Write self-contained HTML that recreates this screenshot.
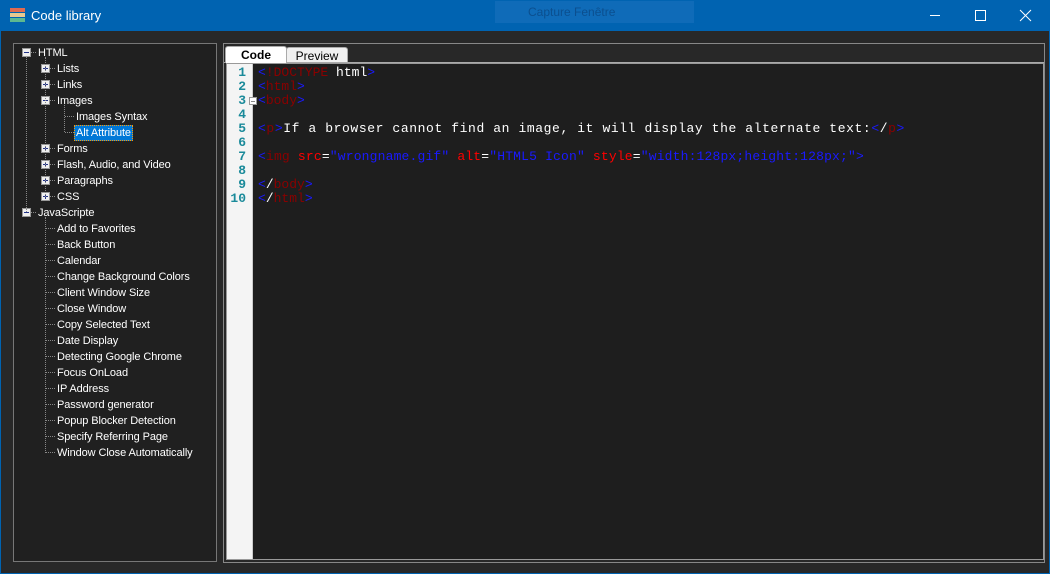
<!DOCTYPE html>
<html><head><style>
*{margin:0;padding:0;box-sizing:border-box}
body{width:1050px;height:574px;background:#0063b1;position:relative;overflow:hidden;font-family:"Liberation Sans",sans-serif}
.win{position:absolute;left:1px;top:31px;width:1048px;height:542px;background:#282828}
.title{position:absolute;left:31px;top:8px;color:#fff;font-size:13px}
.cap{position:absolute;left:495px;top:1px;width:199px;height:22px;background:#0f6bb8;color:#0b4f8f;font-size:12px;padding-left:33px;line-height:22px}
.tree{position:absolute;left:13px;top:43px;width:204px;height:519px;background:#202020;border:1px solid #777}
.t{position:absolute;color:#fff;font-size:11px;letter-spacing:-0.1px;line-height:14px;white-space:nowrap}
.bx{position:absolute;width:9px;height:9px;background:#f0f0f0;border:1px solid #999}
.bx:before{content:"";position:absolute;left:1px;top:3px;width:5px;height:1px;background:#22338a}
.bx.p:after{content:"";position:absolute;left:3px;top:1px;width:1px;height:5px;background:#22338a}
.vl{position:absolute;width:1px;border-left:1px dotted #888}
.hl{position:absolute;height:1px;border-top:1px dotted #888}
.ed{position:absolute;left:223px;top:43px;width:822px;height:520px;border:1px solid #888;background:#282828}
.code{position:absolute;left:226px;top:63px;width:818px;height:497px;background:#1e1e1e;border:1px solid #999}
.gut{position:absolute;left:0;top:0;width:26px;height:100%;background:#f4f4f4;border-right:1px solid #ccc}
.ln{position:absolute;width:19px;text-align:right;left:0;color:#1a8a9a;font:bold 13px "Liberation Mono",monospace;line-height:14px}
.cl{position:absolute;left:31px;font:13px "Liberation Mono",monospace;line-height:14px;color:#fff;white-space:pre}
.b{color:#1a1aff}.r{color:#8b0000}.a{color:#ff0000}
.tab{position:absolute;top:46px;height:17px;font-size:12px;text-align:center;line-height:16px;border:1px solid #aaa;border-bottom:none;border-radius:3px 3px 0 0}
</style></head><body>
<svg style="position:absolute;left:9px;top:7px" width="17" height="16"><rect x="1" y="1" width="15" height="4" fill="#e06a50"/><rect x="1" y="6" width="15" height="4" fill="#e8c890"/><rect x="1" y="11" width="15" height="4" fill="#5db890"/></svg>
<div class="title">Code library</div>
<div class="cap">Capture Fenêtre</div>
<svg style="position:absolute;left:925px;top:8px" width="110" height="16" stroke="#fff" fill="none" stroke-width="1"><path d="M5 7.5h10"/><rect x="50.5" y="2.5" width="10" height="10"/><path d="M95 2l11 11M106 2l-11 11"/></svg>
<div class="win"></div>
<div class="tree"></div>
<div id="tr"></div>
<div class="ed"></div>
<div class="tab" style="left:225px;width:62px;background:#fff;font-weight:bold;z-index:2">Code</div>
<div class="tab" style="left:286px;width:62px;background:#f0f0f0;top:47px;height:16px">Preview</div>
<div style="position:absolute;left:224px;top:62px;width:820px;height:1px;background:#aaa"></div>
<div class="code"><div class="gut"></div>
<div class="ln" style="top:2px">1</div>
<div class="ln" style="top:16px">2</div>
<div class="ln" style="top:30px">3</div>
<div style="position:absolute;left:22px;top:33px;width:8px;height:8px;border:1px solid #999;background:#fff"><div style="position:absolute;left:1px;top:3px;width:4px;height:1px;background:#888"></div></div>
<div class="ln" style="top:44px">4</div>
<div class="ln" style="top:58px">5</div>
<div class="ln" style="top:72px">6</div>
<div class="ln" style="top:86px">7</div>
<div class="ln" style="top:100px">8</div>
<div class="ln" style="top:114px">9</div>
<div class="ln" style="top:128px">10</div>
<div class="cl" style="top:2px"><span class="b">&lt;</span><span class="r">!DOCTYPE</span> html<span class="b">&gt;</span></div>
<div class="cl" style="top:16px"><span class="b">&lt;</span><span class="r">html</span><span class="b">&gt;</span></div>
<div class="cl" style="top:30px"><span class="b">&lt;</span><span class="r">body</span><span class="b">&gt;</span></div>
<div class="cl" style="top:58px;letter-spacing:0.6px"><span class="b">&lt;</span><span class="r">p</span><span class="b">&gt;</span>If a browser cannot find an image, it will display the alternate text:<span class="b">&lt;</span>/<span class="r">p</span><span class="b">&gt;</span></div>
<div class="cl" style="top:86px;letter-spacing:0.17px"><span class="b">&lt;</span><span class="r">img</span> <span class="a">src</span>=<span class="b">"wrongname.gif"</span> <span class="a">alt</span>=<span class="b">"HTML5 Icon"</span> <span class="a">style</span>=<span class="b">"width:128px;height:128px;"&gt;</span></div>
<div class="cl" style="top:114px"><span class="b">&lt;</span>/<span class="r">body</span><span class="b">&gt;</span></div>
<div class="cl" style="top:128px"><span class="b">&lt;</span>/<span class="r">html</span><span class="b">&gt;</span></div>
</div>
<div class="vl" style="left:26px;top:57px;height:155px"></div>
<div class="vl" style="left:45px;top:57px;height:140px"></div>
<div class="vl" style="left:64px;top:105px;height:27px"></div>
<div class="vl" style="left:45px;top:217px;height:236px"></div>
<script>
var rows=[[0,"HTML","m"],[1,"Lists","p"],[1,"Links","p"],[1,"Images","m"],[2,"Images Syntax",""],[2,"Alt Attribute","s"],[1,"Forms","p"],[1,"Flash, Audio, and Video","p"],[1,"Paragraphs","p"],[1,"CSS","p"],[0,"JavaScripte","m"],
[1,"Add to Favorites",""],[1,"Back Button",""],[1,"Calendar",""],[1,"Change Background Colors",""],[1,"Client Window Size",""],[1,"Close Window",""],[1,"Copy Selected Text",""],[1,"Date Display",""],[1,"Detecting Google Chrome",""],[1,"Focus OnLoad",""],[1,"IP Address",""],[1,"Password generator",""],[1,"Popup Blocker Detection",""],[1,"Specify Referring Page",""],[1,"Window Close Automatically",""]];
var h="";rows.forEach(function(r,i){var y=52+16*i,x=38+19*r[0],cx=x-12;
if(r[2]=="m"||r[2]=="p")h+='<div class="bx '+(r[2]=="p"?"p":"")+'" style="left:'+(cx-4)+'px;top:'+(y-4)+'px"></div><div class="hl" style="left:'+(cx+5)+'px;top:'+y+'px;width:5px"></div>';
else h+='<div class="hl" style="left:'+(cx+1)+'px;top:'+y+'px;width:9px"></div>';
if(r[2]=="s")h+='<div class="t" style="left:'+(x-2)+'px;top:'+(y-7)+'px;background:#0078d7;border:1px dotted #f90;padding:0 1px">'+r[1]+'</div>';
else h+='<div class="t" style="left:'+x+'px;top:'+(y-6)+'px">'+r[1]+'</div>';});
document.getElementById("tr").innerHTML=h;
</script>
</body></html>
